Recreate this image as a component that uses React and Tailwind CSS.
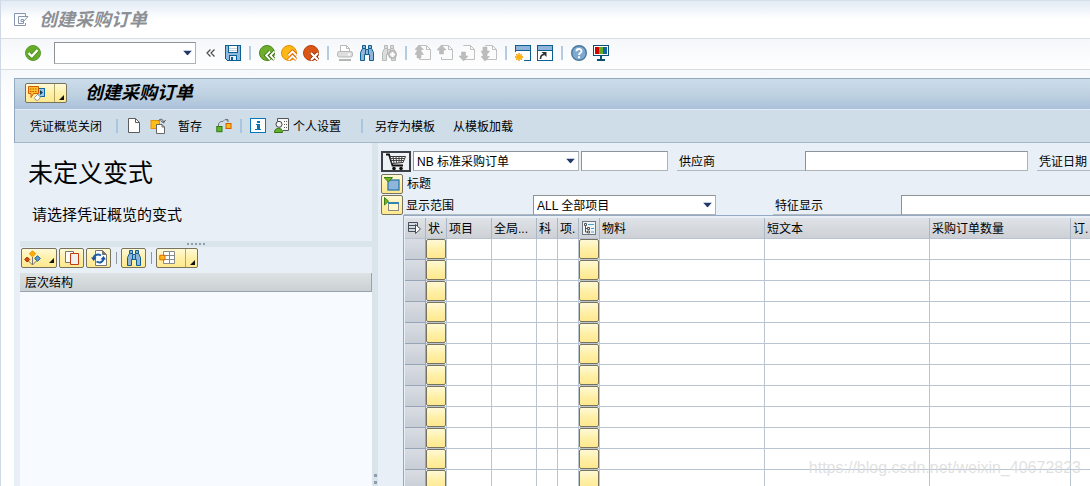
import React from 'react';
import clsx from 'clsx';

const YELLOW = 'bg-linear-to-b from-[#fff9d6] via-[#fff0a8] to-[#ffe88f] border border-[#77735f]';

/* ---------- Icons ---------- */

function Icon({ children, w = 16, h = 16, crisp = false }) {
  return (
    <svg
      width={w}
      height={h}
      viewBox={`0 0 ${w} ${h}`}
      fill="none"
      className="block shrink-0"
      shapeRendering={crisp ? 'crispEdges' : 'auto'}
      aria-hidden="true"
    >
      {children}
    </svg>
  );
}

const WindowIcon = () => (
  <Icon>
    <path d="M12.500 4.500V1.500H1.500V13.500H12.500V11" stroke="#8796ae" />
    <path d="M5.500 11.500V4.500H15L10.500 9.500V7.500H8V9.500H10.500V11.500Z" stroke="#8796ae" />
  </Icon>
);

const EnterIcon = () => (
  <Icon>
    <circle cx="8" cy="8" r="7.5" fill="#66ad27" stroke="#5c9a33" />
    <path d="M3.500 8.200L6.800 11.300L12.500 5" stroke="#4a8a1d" strokeWidth="4" />
    <path d="M3.500 8.200L6.800 11.300L12.500 5" stroke="#fff" strokeWidth="2.400" />
  </Icon>
);

const CollapseIcon = () => (
  <Icon w={10} h={16}>
    <path d="M4.500 4.500L1 8L4.500 11.500M8.500 4.500L5 8L8.500 11.500" stroke="#4a4a4a" strokeWidth="1.200" />
  </Icon>
);

const SaveIcon = () => (
  <Icon crisp>
    <path d="M0 0H16V16H2L0 14Z" fill="#0a5f94" />
    <path d="M1 1H15V15H2L1 14Z" fill="#8fb9dc" />
    <path d="M3 0H13V8H3Z" fill="#0a5f94" />
    <path d="M4 1H12V7H4Z" fill="#fff" />
    <path d="M4 3H12V4H4ZM4 5H12V6H4Z" fill="#c3d3df" />
    <path d="M4 10H12V16H4Z" fill="#0a5f94" />
    <path d="M5 11H11V15H5Z" fill="#e8eef3" />
    <path d="M6 12H8V15H6Z" fill="#0a5f94" />
  </Icon>
);

const BackIcon = () => (
  <Icon>
    <circle cx="8" cy="8" r="7.5" fill="#6fae2c" stroke="#4c861c" />
    <path d="M11 6.500L7 10.500L11 14.500M15.500 6.500L11.500 10.500L15.500 14.500" stroke="#397111" strokeWidth="3.400" />
    <path d="M11 6.500L7 10.500L11 14.500M15.500 6.500L11.500 10.500L15.500 14.500" stroke="#fff" strokeWidth="1.800" />
  </Icon>
);

const ExitIcon = () => (
  <Icon>
    <circle cx="8" cy="8" r="7.5" fill="#fcb814" stroke="#e58a00" />
    <path d="M7.500 10.500L11.500 6.500L15.500 10.500M7.500 15L11.500 11L15.500 15" stroke="#e06a00" strokeWidth="3.400" />
    <path d="M7.500 10.500L11.500 6.500L15.500 10.500M7.500 15L11.500 11L15.500 15" stroke="#fff" strokeWidth="1.800" />
  </Icon>
);

const CancelIcon = () => (
  <Icon>
    <circle cx="8" cy="8" r="7.5" fill="#d95716" stroke="#b8400c" />
    <path d="M8 8L15 15M15 8L8 15" stroke="#9c2c05" strokeWidth="3.800" />
    <path d="M8 8L15 15M15 8L8 15" stroke="#fff" strokeWidth="2.200" />
  </Icon>
);

const PrintIcon = () => (
  <Icon>
    <path d="M3.500 7V.5H9.500L12.500 3.500V7" stroke="#b9b9b9" fill="#fff" />
    <path d="M9.500 .5V3.500H12.500" stroke="#b9b9b9" />
    <rect x=".5" y="6.500" width="15" height="5.500" rx="2" fill="#dedede" stroke="#b5b5b5" />
    <path d="M11 9.500h2" stroke="#fff" strokeWidth="2" />
    <path d="M2 15h12" stroke="#b5b5b5" strokeWidth="2" />
  </Icon>
);

const FindIcon = ({ gray = false, plus = false }) => {
  const line = gray ? '#b8b8b8' : '#0f5f92';
  const fill = gray ? '#dcdcdc' : '#8fb6da';
  return (
    <Icon>
      <path
        d="M3.500 .5H6.500V4.500H9.500V.5H12.500V3.500L14.500 7.500V15.500H10.500V9.500H5.500V15.500H1.500V7.500L3.500 3.500Z"
        fill={fill}
        stroke={line}
      />
      <path d="M3.500 3.500H6M10 3.500H12.500M6.500 5V9M9.500 5V9" stroke={line} />
      {plus && (
        <>
          <circle cx="11.500" cy="9.500" r="4" fill="#c4c4c4" stroke="#b0b0b0" />
          <path d="M11.500 7V12M9 9.500H14" stroke="#fff" strokeWidth="2" />
        </>
      )}
    </Icon>
  );
};

// dir: first / prev / next / last page
const PageIcon = ({ dir }) => {
  const arrows = {
    first: 'M4 0L8.500 4.500H6V6L8.500 9.500H6V13H2V9.500H0L2 6V4.500H0Z',
    prev: 'M4.500 0L9 5H6.500V9H2.500V5H0Z',
    next: 'M4.500 16L9 11H6.500V7H2.500V11H0Z',
    last: 'M4 16L8.500 11.500H6V9.500L8.500 6H6V2H2V6H0L2 9.500V11.500H0Z',
  };
  return (
    <Icon>
      <path d="M4.500 1V.5H11.500L15.500 4.500V14.500H4.500V12" fill="#fbfbfb" stroke="#c0c0c0" />
      <path d="M11.500 .5V4.500H15.500" stroke="#c0c0c0" />
      <path d={arrows[dir]} fill="#bcbcbc" stroke="#b0b0b0" strokeWidth=".5" />
    </Icon>
  );
};

const NewSessionIcon = () => (
  <Icon>
    <rect x=".5" y=".5" width="15" height="15" fill="#fff" stroke="#0d5f90" />
    <path d="M1 1H15V5H1Z" fill="#8fb6da" />
    <path d="M1 5.500H15" stroke="#0d5f90" />
    <path d="M0 7H9V16H0Z" fill="#fff" />
    <path d="M4 8V16M0 12H8M1.200 9.200L6.800 14.800M6.800 9.200L1.200 14.800" stroke="#f0960a" strokeWidth="1.300" />
    <circle cx="4" cy="12" r="2.500" fill="#ffb400" />
  </Icon>
);

const ShortcutIcon = () => (
  <Icon>
    <rect x=".5" y=".5" width="15" height="15" fill="#fff" stroke="#0d5f90" />
    <path d="M1 1H15V5H1Z" fill="#8fb6da" />
    <path d="M1 5.500H15" stroke="#0d5f90" />
    <path d="M3.500 14C3.500 11 5 9.500 7.500 9.500" stroke="#333" strokeWidth="1.600" />
    <path d="M4.500 7H9.500V12Z" fill="#333" />
  </Icon>
);

const HelpIcon = () => (
  <Icon>
    <circle cx="8" cy="8" r="7.300" fill="#7fa9cf" stroke="#48779f" strokeWidth="1.400" />
    <path d="M5.500 6.300C5.500 3.200 10.500 3.200 10.500 6.200C10.500 8 8 8 8 10" stroke="#fff" strokeWidth="1.900" />
    <path d="M7 11.300H9V13.200H7Z" fill="#fff" />
  </Icon>
);

const MonitorIcon = () => (
  <Icon crisp>
    <path d="M0 0H16V11H0Z" fill="#0b4f78" />
    <path d="M1 1H15V10H1Z" fill="#fff" />
    <path d="M2 2H6V9H2Z" fill="#d40000" />
    <path d="M6 2H10V9H6Z" fill="#5fae22" />
    <path d="M10 2H14V9H10Z" fill="#1464a5" />
    <path d="M7 11H9V14H12V16H4V14H7Z" fill="#0b4f78" />
  </Icon>
);

const ServicesIcon = () => (
  <Icon w={18}>
    <rect x="9.500" y="3.500" width="7" height="8" fill="#9cc5e6" stroke="#0d68a5" />
    <path d="M12 5L15 7.500L12 10Z" fill="#083f66" />
    <path d="M.5 1.500H10.500V8.500H5.500L3 12.500V8.500H.5Z" fill="#ffc22e" stroke="#d65a00" />
    <path d="M2 4H9.500M2 6.500H9.500" stroke="#c25400" strokeDasharray="1.500 1" />
    <path d="M6.500 12.500L9.500 9.500L12.500 12L10 15.500L7.500 15Z" fill="#fff" stroke="#9a9a9a" />
  </Icon>
);

const NewDocIcon = () => (
  <Icon>
    <path d="M2.500 .5H9.500L13.500 4.500V14.500H2.500Z" fill="#fff" stroke="#5c5c5c" />
    <path d="M9.500 .5V4.500H13.500" stroke="#5c5c5c" />
  </Icon>
);

const OtherDocIcon = () => (
  <Icon>
    <rect x="1" y="2.500" width="8.500" height="8" fill="#ffbd17" stroke="#e69200" />
    <path d="M6.500 6.500H12L14.500 9V15.500H6.500Z" fill="#fff" stroke="#666" />
    <path d="M12 6.500V9H14.500" stroke="#666" />
    <path d="M8.500 2.500C10.500 .5 13 1 13.500 4M10.500 2.500L13.500 5L15.500 2" stroke="#555" />
  </Icon>
);

const ContextIcon = () => (
  <Icon>
    <path d="M2.500 8V5.500L5 3.500H7L9 1.500H12V4M10 1.500L12 3.500" stroke="#777" />
    <rect x="10" y="5.500" width="5" height="5" fill="#ffb91a" stroke="#d65a00" />
    <rect x=".8" y="8.500" width="5.200" height="5.200" fill="#5fb32a" stroke="#2c7a14" />
  </Icon>
);

const InfoIcon = () => (
  <Icon crisp>
    <path d="M0 0H16V15H0Z" fill="#0a76b8" />
    <path d="M1 1H15V14H1Z" fill="#fff" />
    <path d="M7 3H10V5H7ZM6 6H10V11H11V12H5V11H7V7H6Z" fill="#0a76b8" />
  </Icon>
);

const PersonIcon = () => (
  <Icon>
    <path d="M3.500 3V.5H14.500V12.500H9" fill="#f7f7f7" stroke="#555" />
    <path d="M10 3.500H13M10 6.500H13M10 9.500H13" stroke="#555" strokeDasharray="1 1" />
    <path d="M.5 14.500C.5 11.500 2 10.500 4.500 10.500C7 10.500 8.500 11.500 8.500 14.500Z" fill="#64b02a" stroke="#347413" />
    <circle cx="5" cy="6.300" r="3" fill="#f4f4f4" stroke="#444" />
  </Icon>
);

const VariantIcon = () => (
  <Icon w={18}>
    <path d="M8.500 7V15M4.500 11L8.500 15L12.500 11" stroke="#777" />
    <path d="M8.500 .8L11.500 3.800L8.500 6.800L5.500 3.800Z" fill="#ffb000" stroke="#e88a00" />
    <path d="M3.200 7L5.700 9.500L3.200 12L.7 9.500Z" fill="#d9480f" stroke="#a32d00" />
    <path d="M13.500 5.700L16.300 8.500L13.500 11.300L10.700 8.500Z" fill="#5b9bcb" stroke="#175f94" />
  </Icon>
);

const CopyIcon = () => (
  <Icon>
    <path d="M1.500 1.500H9.500V12.500H1.500Z" fill="#fff" stroke="#777" />
    <path d="M6.500 3.500H14.500V14.500H6.500Z" fill="#f1f1f1" stroke="#c43a12" />
  </Icon>
);

const RefreshIcon = () => (
  <Icon>
    <path d="M4.500 .5H11.500L15.500 4.500V15.500H4.500Z" fill="#fff" stroke="#777" />
    <path d="M11.500 .5V4.500H15.500" fill="#777" stroke="#777" />
    <path d="M2.500 9C2.500 5 6.500 3.500 10 5.500M12.500 8C12.500 12 9 13.500 5.500 11.500" stroke="#1f5fa8" strokeWidth="2" />
    <path d="M0 7.500H5.500L2.700 11ZM9.500 9.500H15L12.500 6Z" fill="#1b4f9c" />
  </Icon>
);

const LayoutIcon = () => (
  <Icon w={18}>
    <path d="M4.500 1.500H15.500V13.500H4.500ZM4.500 5.500H15.500M4.500 9.500H15.500M10.500 1.500V13.500" fill="#fff" stroke="#8a8a8a" />
    <path d="M.8 5.300H6V9.800H.8Z" fill="#ffb91a" stroke="#dc6a00" />
  </Icon>
);

const CartIcon = () => (
  <Icon w={22} h={18}>
    <path d="M1 1.500H4L7.500 12.500H18" stroke="#111" strokeWidth="1.800" />
    <path d="M5 3.500H20.500L18 9.500L7 10.500Z" fill="#fff" stroke="#333" />
    <path d="M8 3.500L9 10M11 3.500L11.500 10M14 3.500V10M17 3.500L16 10M5.500 5.500H20M6 7.500H19" stroke="#444" />
    <circle cx="9" cy="15.500" r="1.800" fill="#111" />
    <circle cx="16" cy="15.500" r="1.800" fill="#111" />
  </Icon>
);

const ExpandIcon = () => (
  <Icon>
    <rect x="4" y="4" width="11" height="10" fill="#8fb6da" stroke="#2a79ad" strokeWidth="1.300" />
    <path d="M0 1.500H8.500L4.500 6Z" fill="#72b52b" stroke="#3d7f14" />
  </Icon>
);

const CollapsedIcon = () => (
  <Icon>
    <rect x="4.500" y="6.500" width="10" height="7" fill="#fff7c9" stroke="#888" />
    <path d="M4 5H15V7H4Z" fill="#3482b3" />
    <path d="M.5 .5V8L4.500 4.200Z" fill="#72b52b" stroke="#3d7f14" />
  </Icon>
);

const SelectAllIcon = () => (
  <Icon>
    <path d="M1.500 2.500H10.500V6M1.500 2.500V11.500H8M1.500 5.500H10M1.500 8.500H8" stroke="#454d5a" />
    <path d="M8.500 4.500L13.500 9L8.500 13.500Z" fill="#fff" stroke="#454d5a" />
  </Icon>
);

const TreeIcon = () => (
  <Icon>
    <rect x="1.500" y="1.500" width="13" height="13" fill="#f0f4f6" stroke="#6e7881" />
    <path d="M3.500 3.500H5.500V5.500H3.500ZM6.500 7.500H8.500V9.500H6.500ZM6.500 11H8.500V13H6.500ZM4.500 6V12H6M4.500 8.500H6" stroke="#555" />
    <path d="M7 4.500H13M10 8.500H13M10 12H13" stroke="#4fa3c7" />
  </Icon>
);

/* ---------- Small controls ---------- */

function Corner() {
  return (
    <svg width="5" height="5" viewBox="0 0 5 5" className="mb-0.5 block shrink-0 self-end" aria-hidden="true">
      <path d="M5 0V5H0Z" fill="#111" />
    </svg>
  );
}

function Separator() {
  return (
    <span className="flex w-1.5 shrink-0 justify-center">
      <span className="h-3.5 w-0.5 bg-[#b4cbe2]" />
    </span>
  );
}

function YellowButton({ label, className, children }) {
  return (
    <button
      type="button"
      aria-label={label}
      className={clsx(YELLOW, 'flex h-5 shrink-0 items-center justify-center rounded-xs', className)}
    >
      {children}
    </button>
  );
}

function SplitButton({ label, children }) {
  return (
    <YellowButton label={label} className="w-[42px]">
      <span className="flex flex-1 items-center pl-0.5">{children}</span>
      <span className="flex h-full w-3 justify-end border-l border-[#b5a766] pr-0.5">
        <Corner />
      </span>
    </YellowButton>
  );
}

const FIELD = 'border border-t-[#8e9397] border-l-[#8e9397] border-r-[#aeb3b7] border-b-[#aeb3b7] bg-white text-black outline-none';

function Select({ id, label, options, className, size = 'h-5' }) {
  return (
    <span className={clsx('relative shrink-0', size, className)}>
      <select id={id} aria-label={label} className={clsx(FIELD, 'block h-full w-full appearance-none pt-px pl-[3px] text-xs leading-4')}>
        {options.map((option) => (
          <option key={option}>{option}</option>
        ))}
      </select>
      <svg width="9" height="5" viewBox="0 0 9 5" className="pointer-events-none absolute top-1/2 right-1 -translate-y-1/2" aria-hidden="true">
        <path d="M0 0H9L4.500 5Z" fill="#22396b" />
      </svg>
    </span>
  );
}

function FieldLabel({ htmlFor, className, children }) {
  return (
    <label htmlFor={htmlFor} className={clsx('h-5 shrink-0 border-b border-[#b3b8bb] pl-0.5 leading-[22px]', className)}>
      {children}
    </label>
  );
}

function IconButton({ label, children, className }) {
  return (
    <button type="button" aria-label={label} className={clsx('shrink-0', className)}>
      {children}
    </button>
  );
}

/* ---------- Page sections ---------- */

const TOOLBAR = [
  { label: '保存', icon: <SaveIcon /> },
  null,
  { label: '返回', icon: <BackIcon /> },
  { label: '退出', icon: <ExitIcon /> },
  { label: '取消', icon: <CancelIcon /> },
  null,
  { label: '打印', icon: <PrintIcon /> },
  { label: '查找', icon: <FindIcon /> },
  { label: '查找下一个', icon: <FindIcon gray plus /> },
  null,
  { label: '首页', icon: <PageIcon dir="first" /> },
  { label: '上一页', icon: <PageIcon dir="prev" /> },
  { label: '下一页', icon: <PageIcon dir="next" /> },
  { label: '末页', icon: <PageIcon dir="last" /> },
  null,
  { label: '新建会话', icon: <NewSessionIcon /> },
  { label: '创建快捷方式', icon: <ShortcutIcon /> },
  null,
  { label: '帮助', icon: <HelpIcon /> },
  { label: '自定义布局', icon: <MonitorIcon /> },
];

function SystemBar() {
  return (
    <header className="border-t border-[#d5deea]">
      <div className="flex h-[38px] items-center gap-2.5 border-b border-[#d9dde2] bg-linear-to-b from-[#e3ebf5] to-white to-50% pl-3">
        <WindowIcon />
        <span className="text-lg leading-6 font-bold text-[#8c8f94] italic">创建采购订单</span>
      </div>
      <div className="flex h-[31px] items-center border-b border-[#d9dde2] bg-linear-to-b from-[#f5f7fa] to-white pb-0.5 pl-6">
        <IconButton label="回车">
          <EnterIcon />
        </IconButton>
        <Select label="命令" options={['']} size="h-[22px]" className="ml-[13px] w-[142px]" />
        <IconButton label="隐藏命令字段" className="ml-2.5">
          <CollapseIcon />
        </IconButton>
        <div className="ml-[9px] flex items-center gap-1.5">
          {TOOLBAR.map((item, i) =>
            item ? (
              <IconButton key={item.label} label={item.label}>
                {item.icon}
              </IconButton>
            ) : (
              <Separator key={i} />
            )
          )}
        </div>
      </div>
    </header>
  );
}

function AppBar() {
  return (
    <div className="border-t border-l border-[#93a9c0] text-xs">
      <div className="flex h-[30px] items-center bg-linear-to-b from-[#ccdceb] via-[#bfd2e1] to-[#abc1da] pb-0.5 pl-2.5">
        <SplitButton label="服务">
          <ServicesIcon />
        </SplitButton>
        <h1 className="ml-[18px] text-lg leading-6 font-bold italic">创建采购订单</h1>
      </div>
      <div className="flex h-[34px] items-center border-t border-b border-t-[#e3edf5] border-b-[#a3b8cc] bg-[#cfdde8] pl-[15px]">
        <button type="button" className="pt-0.5">凭证概览关闭</button>
        <span className="ml-3.5 h-3.5 w-0.5 bg-[#a9c5df]" />
        <IconButton label="创建" className="ml-2">
          <NewDocIcon />
        </IconButton>
        <IconButton label="其他采购订单" className="ml-2">
          <OtherDocIcon />
        </IconButton>
        <button type="button" className="ml-3 pt-0.5">暂存</button>
        <IconButton label="单据流" className="ml-3.5">
          <ContextIcon />
        </IconButton>
        <span className="ml-2 h-3.5 w-0.5 bg-[#a9c5df]" />
        <IconButton label="帮助信息" className="ml-2">
          <InfoIcon />
        </IconButton>
        <button type="button" className="ml-2 flex items-center gap-[3px]">
          <PersonIcon />
          <span className="pt-0.5">个人设置</span>
        </button>
        <span className="ml-5 h-3.5 w-0.5 bg-[#a9c5df]" />
        <button type="button" className="ml-3 pt-0.5">另存为模板</button>
        <button type="button" className="ml-4.5 pt-0.5">从模板加载</button>
      </div>
    </div>
  );
}

function Overview() {
  return (
    <aside className="flex w-[358px] shrink-0 flex-col pl-1.5">
      <h2 className="mt-3 pl-2 text-[25px] leading-9">未定义变式</h2>
      <p className="mt-3.5 pl-3 text-[15px] leading-5">请选择凭证概览的变式</p>
      <div className="mt-4 flex h-1.5 shrink-0 items-center justify-center gap-0.5 bg-[#dae5eb]">
        {[0, 1, 2, 3, 4].map((dot) => (
          <span key={dot} className="size-0.5 bg-[#8d9dad]" />
        ))}
      </div>
      <div className="mt-px flex items-center gap-0.5 pl-px">
        <YellowButton label="选择变式" className="w-9">
          <span className="flex-1 pl-0.5"><VariantIcon /></span>
          <span className="flex self-end pr-0.5 pb-0.5"><Corner /></span>
        </YellowButton>
        <YellowButton label="复制" className="w-[25px]"><CopyIcon /></YellowButton>
        <YellowButton label="刷新" className="w-[25px]"><RefreshIcon /></YellowButton>
        <span className="flex w-1.5 justify-center"><span className="h-3 w-px bg-[#8f989f]" /></span>
        <YellowButton label="查找" className="w-[25px]"><FindIcon /></YellowButton>
        <span className="flex w-1.5 justify-center"><span className="h-3 w-px bg-[#8f989f]" /></span>
        <SplitButton label="更改布局"><LayoutIcon /></SplitButton>
      </div>
      <div className="mt-[5px] h-[19px] shrink-0 border-r border-b border-[#97a3ad] bg-linear-to-b from-[#dde2e4] to-[#cbd0d4] pl-[5px] text-xs leading-5">
        层次结构
      </div>
      <div className="flex-1 bg-[#f7fbff]" />
    </aside>
  );
}

const COLUMNS = [
  { name: '状.', width: 'w-[21px]', cell: 'button' },
  { name: '项目', width: 'w-[45px]' },
  { name: '全局...', width: 'w-[45px]' },
  { name: '科', width: 'w-[21px]' },
  { name: '项.', width: 'w-[21px]' },
  { name: '明细', width: 'w-[21px]', cell: 'button', icon: <TreeIcon /> },
  { name: '物料', width: 'w-[165px]' },
  { name: '短文本', width: 'w-[165px]' },
  { name: '采购订单数量', width: 'w-[141px]' },
  { name: '订.', width: 'w-auto' },
];

const ROWS = Array.from({ length: 12 }, (_, i) => i + 1);

const HEAD_CELL = 'h-[21px] overflow-hidden border-r border-b border-r-[#a9b6c5] border-b-[#b7c3d2] bg-linear-to-b from-[#dfe3e7] to-[#cdd1d6]';

function ItemTable() {
  return (
    <div className="ml-[22px] min-h-0 flex-1 overflow-hidden border-t border-l border-[#93a9c4] pt-0.5 pl-px">
      <table className="w-full min-w-[712px] table-fixed border-separate border-spacing-0 text-xs">
        <thead>
          <tr>
            <th className={clsx(HEAD_CELL, 'w-[21px] p-0 pl-0.5')} aria-label="选择全部">
              <SelectAllIcon />
            </th>
            {COLUMNS.map(({ name, width, icon }) => (
              <th
                key={name}
                className={clsx(HEAD_CELL, 'p-0 pl-0.5 text-left leading-5 font-normal whitespace-nowrap', !icon && 'pt-px', width)}
                aria-label={icon ? name : undefined}
              >
                {icon || <span className="block h-[19px] leading-[21px]">{name}</span>}
              </th>
            ))}
          </tr>
        </thead>
        <tbody>
          {ROWS.map((row) => (
            <tr key={row}>
              <td className="h-[21px] border-r border-b border-[#98a4b8] bg-linear-to-b from-[#d9dde3] to-[#c8cdd6] p-0" />
              {COLUMNS.map(({ name, cell }) => (
                <td key={name} className="h-[21px] border-r border-b border-[#bac5d2] bg-white p-0">
                  {cell && (
                    <button type="button" aria-label={`${name} ${row}`} className={clsx(YELLOW, 'block h-5 w-full rounded-xs')} />
                  )}
                </td>
              ))}
            </tr>
          ))}
        </tbody>
      </table>
    </div>
  );
}

function OrderForm() {
  return (
    <main className="flex min-w-0 flex-1 flex-col overflow-hidden pt-2 pl-[3px] text-xs">
      <div className="flex h-[21px] shrink-0">
        <button type="button" aria-label="采购订单" className="flex h-[21px] w-[30px] shrink-0 items-center justify-center border-2 border-[#3c3f44] bg-[#eef2f5]">
          <CartIcon />
        </button>
        <Select label="订单类型" options={['NB 标准采购订单']} className="ml-0.5 w-[166px]" />
        <input aria-label="采购订单号" className={clsx(FIELD, 'ml-0.5 h-5 w-[87px] shrink-0')} />
        <FieldLabel htmlFor="vendor" className="ml-[9px] w-32">供应商</FieldLabel>
        <input id="vendor" className={clsx(FIELD, 'h-5 w-[223px] shrink-0')} />
        <FieldLabel htmlFor="docDate" className="ml-[9px] w-32">凭证日期</FieldLabel>
        <input id="docDate" className={clsx(FIELD, 'h-5 w-[87px] shrink-0')} />
      </div>
      <div className="mt-px flex h-[21px] shrink-0 items-center">
        <YellowButton label="展开标题" className="w-[22px]"><ExpandIcon /></YellowButton>
        <span className="ml-1 pt-px">标题</span>
      </div>
      <div className="mt-px flex h-5 shrink-0">
        <YellowButton label="展开项目" className="w-[22px]"><CollapsedIcon /></YellowButton>
        <FieldLabel htmlFor="range" className="ml-px w-[129px]">显示范围</FieldLabel>
        <Select id="range" options={['ALL 全部项目']} className="w-[183px]" />
        <FieldLabel htmlFor="feature" className="ml-[57px] w-32">特征显示</FieldLabel>
        <input id="feature" className={clsx(FIELD, 'h-5 min-w-[223px] shrink-0')} />
      </div>
      <ItemTable />
    </main>
  );
}

export default function App() {
  return (
    <div className="relative flex h-screen flex-col overflow-hidden border-l border-[#d0dae6] bg-white font-['Liberation_Sans','Noto_Sans_CJK_SC',sans-serif] text-black">
      <SystemBar />
      <div className="flex min-h-0 flex-1 flex-col bg-linear-to-b from-[#f6f9fc] to-white to-10% pt-2 pl-[13px]">
        <AppBar />
        <div className="flex min-h-0 flex-1 bg-[#e8eff6]">
          <Overview />
          <div className="flex w-1.5 shrink-0 flex-col items-center justify-end gap-1 bg-[#dae5eb] pb-0.5">
            <span className="size-[3px] bg-[#8d9dad]" />
            <span className="size-[3px] bg-[#8d9dad]" />
          </div>
          <OrderForm />
        </div>
      </div>
      <span className="pointer-events-none absolute right-[9px] bottom-1.5 text-base text-[#d9d9d9]/80">
        https://blog.csdn.net/weixin_40672823
      </span>
    </div>
  );
}
